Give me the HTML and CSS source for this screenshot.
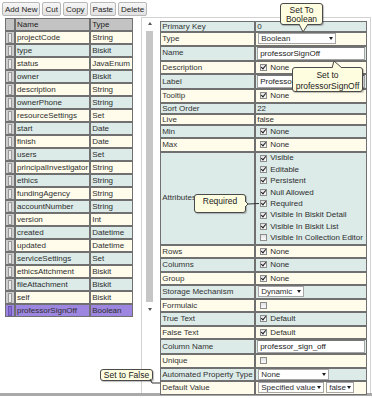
FILE: index.html
```html
<!DOCTYPE html>
<html>
<head>
    <link rel="stylesheet" href="styles.css">
</head>
<body>
    <div class="app">
        <div class="toolbar">
            <button class="btn">Add New</button>
            <button class="btn">Cut</button>
            <button class="btn">Copy</button>
            <button class="btn">Paste</button>
            <button class="btn">Delete</button>
        </div>

        <div class="main">
            <table class="list">
                <tr class="head"><th class="grip"></th><th class="name">Name</th><th class="type">Type</th></tr>
                <tr class="cream"><td class="grip"><span></span></td><td>projectCode</td><td>String</td></tr>
                <tr class="teal"><td class="grip"><span></span></td><td>type</td><td>Biskit</td></tr>
                <tr class="cream"><td class="grip"><span></span></td><td>status</td><td>JavaEnum</td></tr>
                <tr class="teal"><td class="grip"><span></span></td><td>owner</td><td>Biskit</td></tr>
                <tr class="cream"><td class="grip"><span></span></td><td>description</td><td>String</td></tr>
                <tr class="teal"><td class="grip"><span></span></td><td>ownerPhone</td><td>String</td></tr>
                <tr class="cream"><td class="grip"><span></span></td><td>resourceSettings</td><td>Set</td></tr>
                <tr class="teal"><td class="grip"><span></span></td><td>start</td><td>Date</td></tr>
                <tr class="cream"><td class="grip"><span></span></td><td>finish</td><td>Date</td></tr>
                <tr class="teal"><td class="grip"><span></span></td><td>users</td><td>Set</td></tr>
                <tr class="cream"><td class="grip"><span></span></td><td>principalInvestigator</td><td>String</td></tr>
                <tr class="teal"><td class="grip"><span></span></td><td>ethics</td><td>String</td></tr>
                <tr class="cream"><td class="grip"><span></span></td><td>fundingAgency</td><td>String</td></tr>
                <tr class="teal"><td class="grip"><span></span></td><td>accountNumber</td><td>String</td></tr>
                <tr class="cream"><td class="grip"><span></span></td><td>version</td><td>Int</td></tr>
                <tr class="teal"><td class="grip"><span></span></td><td>created</td><td>Datetime</td></tr>
                <tr class="cream"><td class="grip"><span></span></td><td>updated</td><td>Datetime</td></tr>
                <tr class="teal"><td class="grip"><span></span></td><td>serviceSettings</td><td>Set</td></tr>
                <tr class="cream"><td class="grip"><span></span></td><td>ethicsAttchment</td><td>Biskit</td></tr>
                <tr class="teal"><td class="grip"><span></span></td><td>fileAttachment</td><td>Biskit</td></tr>
                <tr class="cream"><td class="grip"><span></span></td><td>self</td><td>Biskit</td></tr>
                <tr class="selected"><td class="grip"><span></span></td><td>professorSignOff</td><td>Boolean</td></tr>
            </table>

            <div class="panel">
                <div class="scroll">
                    <span class="arrow-up"></span>
                    <div class="thumb"></div>
                    <span class="arrow-down"></span>
                </div>

                <table class="props">
                    <tr class="teal tight"><td class="label">Primary Key</td><td class="val">0</td></tr>
                    <tr class="cream"><td class="label">Type</td><td class="val"><div class="v"><span class="sel w-bool">Boolean<i class="dd"></i></span></div></td></tr>
                    <tr class="teal"><td class="label">Name</td><td class="val"><input class="txt" value="professorSignOff"></td></tr>
                    <tr class="cream"><td class="label">Description</td><td class="val"><div class="v"><span class="cb on"></span>None</div></td></tr>
                    <tr class="teal"><td class="label">Label</td><td class="val"><input class="txt" value="Professor Sign Off"></td></tr>
                    <tr class="cream"><td class="label">Tooltip</td><td class="val"><div class="v"><span class="cb on"></span>None</div></td></tr>
                    <tr class="teal tight"><td class="label">Sort Order</td><td class="val">22</td></tr>
                    <tr class="cream tight"><td class="label">Live</td><td class="val">false</td></tr>
                    <tr class="teal"><td class="label">Min</td><td class="val"><div class="v"><span class="cb on"></span>None</div></td></tr>
                    <tr class="cream"><td class="label">Max</td><td class="val"><div class="v"><span class="cb on"></span>None</div></td></tr>
                    <tr class="teal">
                        <td class="label">Attributes</td>
                        <td class="val">
                            <div class="attrs">
                                <div class="v"><span class="cb on"></span>Visible</div>
                                <div class="v"><span class="cb on"></span>Editable</div>
                                <div class="v"><span class="cb on"></span>Persistent</div>
                                <div class="v"><span class="cb on"></span>Null Allowed</div>
                                <div class="v"><span class="cb on"></span>Required</div>
                                <div class="v"><span class="cb on"></span>Visible In Biskit Detail</div>
                                <div class="v"><span class="cb on"></span>Visible In Biskit List</div>
                                <div class="v"><span class="cb"></span>Visible In Collection Editor</div>
                            </div>
                        </td>
                    </tr>
                    <tr class="cream"><td class="label">Rows</td><td class="val"><div class="v"><span class="cb on"></span>None</div></td></tr>
                    <tr class="teal"><td class="label">Columns</td><td class="val"><div class="v"><span class="cb on"></span>None</div></td></tr>
                    <tr class="cream"><td class="label">Group</td><td class="val"><div class="v"><span class="cb on"></span>None</div></td></tr>
                    <tr class="teal"><td class="label">Storage Mechanism</td><td class="val"><div class="v"><span class="sel w-dyn">Dynamic<i class="dd"></i></span></div></td></tr>
                    <tr class="cream"><td class="label">Formulaic</td><td class="val"><div class="v"><span class="cb"></span></div></td></tr>
                    <tr class="teal"><td class="label">True Text</td><td class="val"><div class="v"><span class="cb on"></span>Default</div></td></tr>
                    <tr class="cream"><td class="label">False Text</td><td class="val"><div class="v"><span class="cb on"></span>Default</div></td></tr>
                    <tr class="teal"><td class="label">Column Name</td><td class="val"><input class="txt" value="professor_sign_off"></td></tr>
                    <tr class="cream"><td class="label">Unique</td><td class="val"><div class="v"><span class="cb"></span></div></td></tr>
                    <tr class="teal"><td class="label">Automated Property Type</td><td class="val"><div class="v"><span class="sel w-none">None<i class="dd"></i></span></div></td></tr>
                    <tr class="cream"><td class="label">Default Value</td><td class="val"><div class="v"><span class="sel w-spec">Specified value<i class="dd"></i></span><span class="sel w-false">false<i class="dd"></i></span></div></td></tr>
                </table>
            </div>
        </div>

        <!-- callouts -->
        <div class="note note-type">Set To<br>Boolean
            <svg class="tail" width="12" height="9" viewBox="0 0 12 9"><path d="M1 0 L5 8 L10 0" fill="#fffde0" stroke="#4a4a4a" stroke-width="1"/></svg>
        </div>
        <div class="note note-name">Set to<br>professorSignOff
            <svg class="tail" width="12" height="8" viewBox="0 0 12 8"><path d="M1 8 L3 1 L11 8" fill="#fffde0" stroke="#4a4a4a" stroke-width="1"/></svg>
        </div>
        <div class="note note-req">Required
            <svg class="tail" width="14" height="8" viewBox="0 0 14 8"><path d="M0 1 L3 4 L0 7" fill="#fffde0" stroke="#4a4a4a" stroke-width="1"/><path d="M3 4 L14 3.5" stroke="#333" stroke-width="1"/></svg>
        </div>
        <div class="note note-false">Set to False
            <svg class="tail" width="10" height="6" viewBox="0 0 10 6"><path d="M0 0 L2 4 L10 4" fill="none" stroke="#333" stroke-width="1"/></svg>
        </div>
    </div>
</body>
</html>
```

FILE: styles.css
```css
body {
    margin: 0;
    background-color: #fff;
    font-family: "Liberation Sans", Arial, sans-serif;
    font-size: 8px;
    color: #2e2e2e;
}

.app {
    position: relative;
    height: 393px;
    border-bottom: 3px solid #a9a9a9;
}

.toolbar {
    display: flex;
    gap: 2px;
    padding: 2px 0 0 2px;
}

.btn {
    height: 14px;
    padding: 0 2px;
    font-family: inherit;
    font-size: 8px;
    color: #222;
    background: linear-gradient(#f7f7f7, #e1e1e1);
    border: 1px solid #b8b8b8;
    border-radius: 2px;
}

.main {
    display: flex;
    align-items: flex-start;
    margin-top: 1px;
}

/* field list */

.list {
    margin: 1px 0 0 5px;
    border-collapse: separate;
    border-spacing: 0;
}

.list th,
.list td {
    height: 11px;
    padding: 0 1px;
    line-height: 11px;
    border: 1px solid #707070;
    text-align: left;
    font-weight: normal;
    white-space: nowrap;
}

.list .head th {
    background-color: #c3c3c3;
    color: #222;
}

.list .grip {
    width: 8px;
    padding: 0;
    background-color: #cdcdcd;
}

.list .grip span {
    display: block;
    width: 2px;
    height: 8px;
    margin-left: 2px;
    background-color: #ececec;
    border: 1px solid #9a9a9a;
}

.list .name { width: 70px; }
.list .type { width: 39px; }

.cream td { background-color: #fffcec; }
.teal td { background-color: #dcebe8; }

.list .selected td { background-color: #9d86df; }
.list .selected .grip span {
    background-color: #8a70d4;
    border-color: #6a55b0;
}

/* property sheet */

.panel {
    display: flex;
    box-sizing: border-box;
    width: 230px;
    height: 376px;
    margin-left: 8px;
    padding: 3px 0 0 4px;
    border: 1px solid #d2d2d2;
    border-bottom: none;
}

.scroll {
    display: flex;
    flex-direction: column;
    align-items: center;
    width: 7px;
    margin-right: 7px;
}

.arrow-up,
.arrow-down {
    width: 0;
    height: 0;
    border-left: 2px solid transparent;
    border-right: 2px solid transparent;
}

.arrow-up {
    margin-top: 1px;
    border-bottom: 3px solid #555;
}

.arrow-down {
    margin-top: 6px;
    border-top: 3px solid #555;
}

.thumb {
    width: 7px;
    height: 271px;
    margin-top: 6px;
    background-color: #c6c6c6;
}

.props {
    border-collapse: separate;
    border-spacing: 0;
}

.props td {
    padding: 0 1px;
    line-height: 11.5px;
    border: 1px solid #707070;
    white-space: nowrap;
}

.props .tight td { line-height: 9px; }

.props .label {
    width: 91px;
    color: #333;
}

.props .val { width: 108px; }

.v {
    display: flex;
    align-items: center;
    gap: 2px;
    height: 11.5px;
    padding-left: 3px;
}

.attrs .v { height: 11.4px; }

.cb {
    position: relative;
    box-sizing: border-box;
    width: 7px;
    height: 7px;
    margin-right: 1px;
    background: linear-gradient(#e2e2e2, #fafafa);
    border: 1px solid #8c8c8c;
}

.cb.on::after {
    content: "";
    position: absolute;
    left: 1px;
    top: -1px;
    width: 2px;
    height: 4px;
    border: solid #1e1e1e;
    border-width: 0 1.5px 1.5px 0;
    transform: rotate(40deg);
}

.sel {
    display: flex;
    align-items: center;
    justify-content: space-between;
    box-sizing: border-box;
    height: 11px;
    padding: 0 2px 0 2px;
    background-color: #fff;
    border: 1px solid #a6a6a6;
}

.v .sel:first-child { margin-left: -2px; }

.dd {
    width: 0;
    height: 0;
    border-left: 2px solid transparent;
    border-right: 2px solid transparent;
    border-top: 3px solid #1e1e1e;
}

.w-bool { width: 78px; }
.w-dyn { width: 46px; }
.w-none { width: 71px; }
.w-spec { width: 66px; }
.w-false { width: 28px; }

.txt {
    display: block;
    box-sizing: border-box;
    width: 108px;
    height: 13px;
    margin: 0;
    padding: 0 2px;
    font-family: inherit;
    font-size: 8px;
    color: #222;
    background-color: #fff;
    border: 1px solid #a3a3a3;
    border-top-color: #777;
}

/* callouts */

.note {
    position: absolute;
    box-sizing: border-box;
    font-size: 8.5px;
    line-height: 9px;
    text-align: center;
    color: #222;
    background-color: #fffde0;
    border: 1px solid #4a4a4a;
    border-radius: 3px;
    box-shadow: 1px 1px 1px rgba(0, 0, 0, 0.25);
}

.tail {
    position: absolute;
    overflow: visible;
}

.note-type {
    left: 280px;
    top: 3px;
    width: 43px;
    height: 22px;
    padding-top: 2px;
}

.note-type .tail { left: 17px; top: 20px; }

.note-name {
    left: 292px;
    top: 67px;
    width: 71px;
    height: 25px;
    padding-top: 2px;
    line-height: 11px;
}

.note-name .tail { left: 38px; top: -8px; }

.note-req {
    left: 194px;
    top: 194px;
    width: 52px;
    height: 19px;
    padding-top: 2px;
}

.note-req .tail { left: 50px; top: 5px; }

.note-false {
    left: 100px;
    top: 369px;
    width: 53px;
    height: 12px;
    line-height: 10px;
}

.note-false .tail { left: 49px; top: 9px; }
```
